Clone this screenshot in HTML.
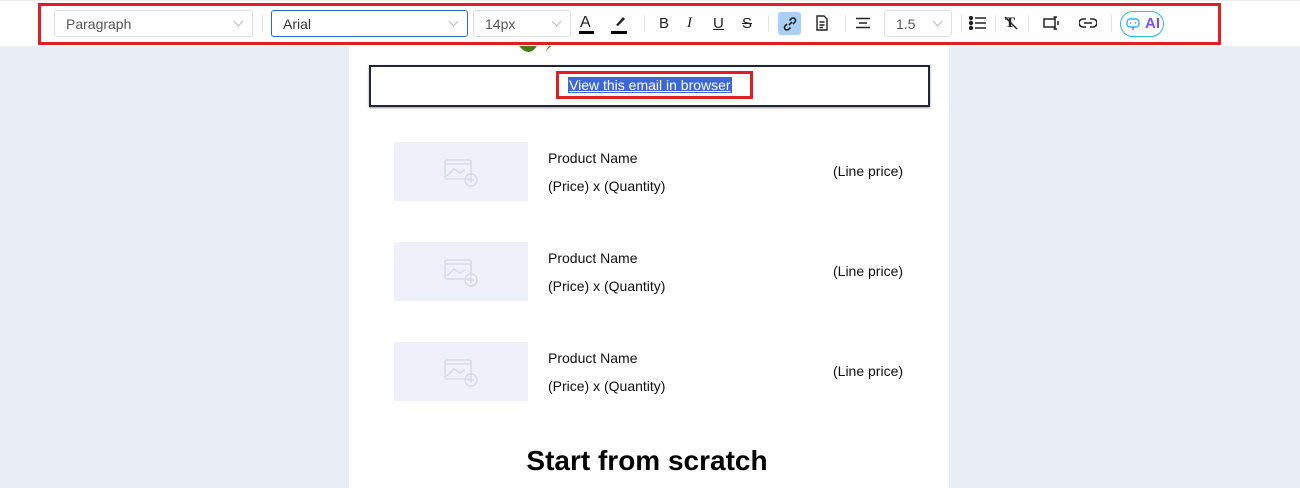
<!DOCTYPE html>
<html><head><meta charset="utf-8"><style>
*{box-sizing:border-box;margin:0;padding:0}
body{width:1300px;height:488px;overflow:hidden;background:#e9edf5;font-family:"Liberation Sans",Arial,sans-serif;position:relative}
.tb{position:absolute;left:0;top:0;width:1300px;height:46px;background:#fff;border-top:1px solid #eee}
.red{position:absolute;left:38px;top:3px;width:1183px;height:42px;border:3px solid #e21d24;z-index:5}
.sel{position:absolute;top:9px;height:27px;border:1px solid #dcdfe6;border-radius:3px;font-size:14px;color:#555;padding:5px 11px;background:#fff}
.sel .ch{position:absolute;right:10px;top:7px;width:7px;height:7px;border-right:1px solid #bbb;border-bottom:1px solid #bbb;transform:rotate(45deg)}
.sep{position:absolute;top:14px;width:1px;height:17px;background:#e3e3e3}
.ic{position:absolute;top:14px;font-size:15px;color:#222}
.email{position:absolute;left:349px;top:46px;width:600px;height:442px;background:#fff}
.prod{position:absolute;left:45px;width:134px;height:59px;background:#f0f0fa}
.t{position:absolute;font-size:14px;color:#111}
</style></head><body>
<div class="tb">
<div class="sel" style="left:54px;width:199px">Paragraph<span class="ch"></span></div>
<div class="sep" style="left:262px"></div>
<div class="sel" style="left:271px;width:197px;border-color:#2a66d6;color:#333">Arial<span class="ch"></span></div>
<div class="sel" style="left:473px;width:98px">14px<span class="ch"></span></div>
<div class="ic" style="left:580px;top:13px;font-size:16px">A</div><div style="position:absolute;left:579px;top:30px;width:15px;height:3px;background:#000"></div>
<svg style="position:absolute;left:612px;top:13px" width="16" height="14"><path d="M4 11 L11 3 L13 5 L6 12 Z" fill="#222"/></svg><div style="position:absolute;left:611px;top:30px;width:16px;height:3px;background:#000"></div>
<div class="sep" style="left:644px"></div>
<div class="ic" style="left:659px">B</div>
<div class="ic" style="left:687px;font-style:italic;font-family:'Liberation Serif',serif">I</div>
<div class="ic" style="left:713px;text-decoration:underline">U</div>
<div class="ic" style="left:742px;text-decoration:line-through">S</div>
<div class="sep" style="left:768px"></div>
<div style="position:absolute;left:778px;top:11px;width:23px;height:23px;background:#a9d0f7;border-radius:3px"></div>
<svg style="position:absolute;left:782px;top:15px" width="16" height="16" fill="none" stroke="#222" stroke-width="1.6"><path d="M7 9 L10 6 M5 8 L3 10 a2.5 2.5 0 0 0 3.5 3.5 L8.5 11.5 M11 8 L13 6 a2.5 2.5 0 0 0 -3.5 -3.5 L7.5 4.5"/></svg>
<svg style="position:absolute;left:815px;top:14px" width="14" height="17" fill="none" stroke="#222" stroke-width="1.4"><path d="M2 1 H9 L12 4 V15 H2 Z M4.5 7 H9.5 M4.5 10 H9.5 M4.5 12.5 H8"/></svg>
<div class="sep" style="left:845px"></div>
<svg style="position:absolute;left:855px;top:16px" width="16" height="12" stroke="#222" stroke-width="1.5"><path d="M1 1.5 H15 M4 6 H12 M1 10.5 H15"/></svg>
<div class="sel" style="left:884px;width:68px">1.5<span class="ch"></span></div>
<div class="sep" style="left:961px"></div>
<svg style="position:absolute;left:969px;top:15px" width="18" height="14" stroke="#222" stroke-width="1.6"><path d="M6 2 H17 M6 7 H17 M6 12 H17"/><circle cx="2" cy="2" r="1.4" fill="#222"/><circle cx="2" cy="7" r="1.4" fill="#222"/><circle cx="2" cy="12" r="1.4" fill="#222"/></svg>
<div class="sep" style="left:995px"></div>
<div class="ic" style="left:1005px;font-weight:bold;font-family:'Liberation Serif',serif">T</div><svg style="position:absolute;left:1003px;top:14px" width="16" height="16" stroke="#222" stroke-width="1.5"><path d="M2 2 L14 14"/></svg>
<div class="sep" style="left:1028px"></div>
<svg style="position:absolute;left:1043px;top:15px" width="18" height="15" fill="none" stroke="#222" stroke-width="1.5"><path d="M12 3 H1 V11 H12 M12 1 V13 M10.5 1 H14 M10.5 13 H14 M15 5 V9"/></svg>
<svg style="position:absolute;left:1079px;top:17px" width="18" height="10" fill="none" stroke="#222" stroke-width="1.6"><path d="M7 1 H4 a4 4 0 0 0 0 8 H7 M11 1 H14 a4 4 0 0 1 0 8 H11 M5 5 H13"/></svg>
<div class="sep" style="left:1111px"></div>
<div style="position:absolute;left:1120px;top:10px;width:44px;height:26px;border:1px solid #2fb5f0;border-radius:13px"></div>
<svg style="position:absolute;left:1125px;top:15px" width="16" height="16" fill="none" stroke="#2fb5f0" stroke-width="1.4"><rect x="2" y="3" width="12" height="8" rx="3"/><path d="M5 7 H6 M10 7 H11 M8 11 V14" stroke="#a45bf0"/></svg>
<div style="position:absolute;left:1145px;top:14px;font-size:15px;font-weight:bold;color:#7d4ff0">AI</div>
</div>
<div class="red"></div>
<div class="email">
<svg style="position:absolute;left:170px;top:0" width="40" height="10"><path d="M0 0 Q10 12 18 0 Z" fill="#4e7a12"/><path d="M26 6 L30 0 L32 0 Z" fill="#4e7a12"/></svg>
<div style="position:absolute;left:20px;top:19px;width:561px;height:42px;border:2px solid #1e2733;box-shadow:0 1px 2px #999"></div>
<div style="position:absolute;left:207px;top:25px;width:197px;height:28px;border:3px solid #e21d24"></div>
<div style="position:absolute;left:219px;top:31px;background:#3b67d9;color:#fff;font-size:14px;text-decoration:underline;padding:0 1px;line-height:16px">View this email in browser</div>
<div class="prod" style="top:96px"></div><div class="prod" style="top:196px"></div><div class="prod" style="top:296px"></div>
<svg style="position:absolute;left:94px;top:112px" width="36" height="30" fill="none" stroke="#d5dbe8" stroke-width="1.5"><rect x="2" y="2" width="26" height="19" rx="2"/><path d="M2 6 H28 M4 18 L11 11 L17 15 L22 12"/><circle cx="28" cy="22" r="6"/><path d="M28 19 V25 M25 22 H31"/></svg>
<svg style="position:absolute;left:94px;top:212px" width="36" height="30" fill="none" stroke="#d5dbe8" stroke-width="1.5"><rect x="2" y="2" width="26" height="19" rx="2"/><path d="M2 6 H28 M4 18 L11 11 L17 15 L22 12"/><circle cx="28" cy="22" r="6"/><path d="M28 19 V25 M25 22 H31"/></svg>
<svg style="position:absolute;left:94px;top:312px" width="36" height="30" fill="none" stroke="#d5dbe8" stroke-width="1.5"><rect x="2" y="2" width="26" height="19" rx="2"/><path d="M2 6 H28 M4 18 L11 11 L17 15 L22 12"/><circle cx="28" cy="22" r="6"/><path d="M28 19 V25 M25 22 H31"/></svg>
<div class="t" style="left:199px;top:104px">Product Name</div><div class="t" style="left:199px;top:132px">(Price) x (Quantity)</div><div class="t" style="left:484px;top:117px">(Line price)</div>
<div class="t" style="left:199px;top:204px">Product Name</div><div class="t" style="left:199px;top:232px">(Price) x (Quantity)</div><div class="t" style="left:484px;top:217px">(Line price)</div>
<div class="t" style="left:199px;top:304px">Product Name</div><div class="t" style="left:199px;top:332px">(Price) x (Quantity)</div><div class="t" style="left:484px;top:317px">(Line price)</div>
<div style="position:absolute;left:-2px;width:600px;top:399px;text-align:center;font-size:28px;font-weight:bold;color:#000">Start from scratch</div>
</div>
</body></html>
